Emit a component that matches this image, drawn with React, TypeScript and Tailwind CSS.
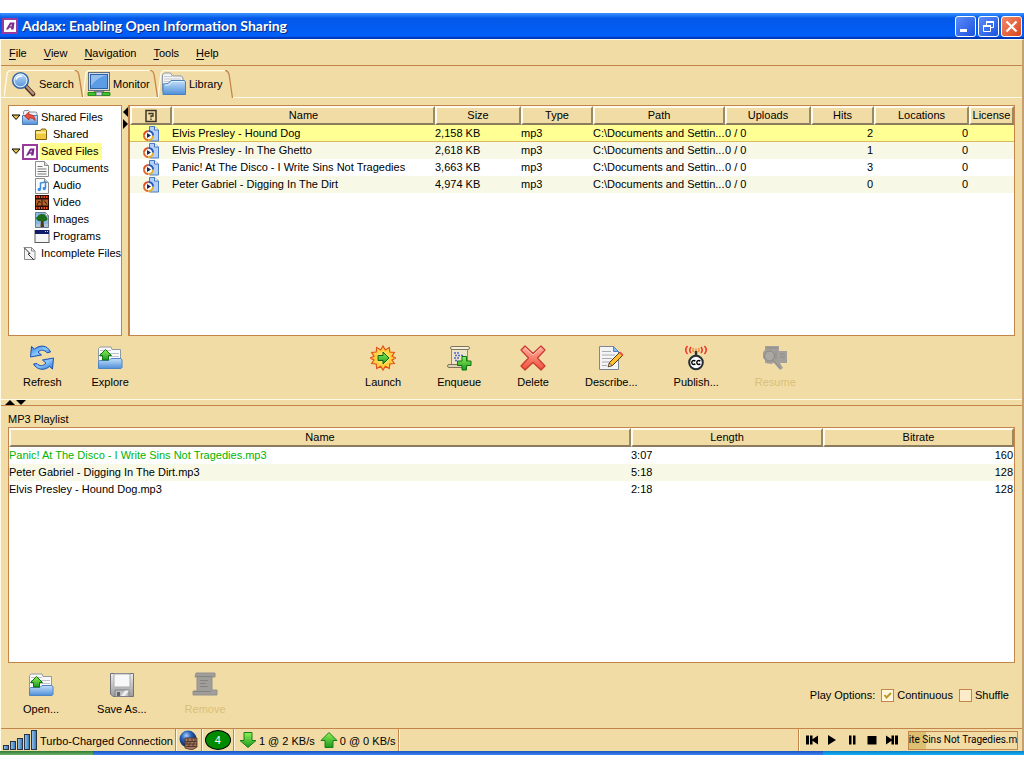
import type { ReactNode } from "react";

interface Track { name: string; size: string; hits: number; }
interface Song { name: string; length: string; bitrate: number; }

const tracks: Track[] = [
  { name: "Elvis Presley - Hound Dog", size: "2,158 KB", hits: 2 },
  { name: "Elvis Presley - In The Ghetto", size: "2,618 KB", hits: 1 },
  { name: "Panic! At The Disco - I Write Sins Not Tragedies", size: "3,663 KB", hits: 3 },
  { name: "Peter Gabriel - Digging In The Dirt", size: "4,974 KB", hits: 0 },
];

const songs: Song[] = [
  { name: "Panic! At The Disco - I Write Sins Not Tragedies.mp3", length: "3:07", bitrate: 160 },
  { name: "Peter Gabriel - Digging In The Dirt.mp3", length: "5:18", bitrate: 128 },
  { name: "Elvis Presley - Hound Dog.mp3", length: "2:18", bitrate: 128 },
];

const menus = ["File", "View", "Navigation", "Tools", "Help"];

/* ---------- icons ---------- */

function Svg({ w, h = w, children }: { w: number; h?: number; children: ReactNode }) {
  return <svg width={w} height={h} viewBox={`0 0 ${w} ${h}`} className="block shrink-0" aria-hidden="true">{children}</svg>;
}

function Defs() {
  return (
    <svg width="0" height="0" className="absolute" aria-hidden="true">
      <defs>
        <linearGradient id="blue" x1="0" y1="0" x2="0" y2="1"><stop offset="0" stopColor="#c4e0fb" /><stop offset="1" stopColor="#4f8fd8" /></linearGradient>
        <linearGradient id="deep" x1="0" y1="0" x2="1" y2="1"><stop offset="0" stopColor="#2f7ce0" /><stop offset="0.5" stopColor="#8cc8fc" /><stop offset="1" stopColor="#2468d0" /></linearGradient>
        <linearGradient id="green" x1="0" y1="0" x2="0" y2="1"><stop offset="0" stopColor="#8ff05a" /><stop offset="1" stopColor="#1c9a1c" /></linearGradient>
        <linearGradient id="red" x1="0" y1="0" x2="0" y2="1"><stop offset="0" stopColor="#ffb09c" /><stop offset="1" stopColor="#f0503c" /></linearGradient>
        <linearGradient id="bar" x1="0" y1="0" x2="1" y2="0"><stop offset="0" stopColor="#9cc8f0" /><stop offset="1" stopColor="#2f74b8" /></linearGradient>
        <radialGradient id="globe" cx="0.4" cy="0.3" r="0.7"><stop offset="0" stopColor="#a8d0ff" /><stop offset="0.4" stopColor="#2c62b8" /><stop offset="1" stopColor="#0a1c48" /></radialGradient>
        <linearGradient id="silver" x1="0" y1="0" x2="0" y2="1"><stop offset="0" stopColor="#ececec" /><stop offset="1" stopColor="#9b9b9b" /></linearGradient>
      </defs>
    </svg>
  );
}

const LogoIcon = () => (
  <Svg w={16}>
    <rect x="1" y="1" width="14" height="14" fill="#fff" stroke="#9a3a9a" strokeWidth="2" />
    <path d="M4 11.500 8 4.500h4.500l-1 7H9l.3-1.800H7.200L6.200 11.500ZM8 8.200h1.500l.3-1.800H9Z" fill="#7d2a8c" />
  </Svg>
);

const SearchIcon = () => (
  <Svg w={26}>
    <path d="m15.500 16 6.500 7" stroke="#4a2c20" strokeWidth="4.500" strokeLinecap="round" />
    <path d="m16 16 6 6.500" stroke="#b89478" strokeWidth="2.500" strokeLinecap="round" />
    <circle cx="9.500" cy="9.500" r="7.800" fill="url(#blue)" stroke="#3a68a4" strokeWidth="1.600" />
    <circle cx="9.500" cy="9.500" r="6.400" fill="none" stroke="#e8f4ff" />
    <path d="M5 8.500c1-3 4-4 6-3" fill="none" stroke="#fff" strokeWidth="1.500" />
  </Svg>
);

const MonitorIcon = () => (
  <Svg w={24}>
    <rect x="1.500" y="0.500" width="21" height="18" fill="#d8dce0" stroke="#5c6c80" />
    <rect x="3.500" y="2.500" width="17" height="14" fill="#5c9ce4" stroke="#2a62a8" />
    <path d="M4 14V3h16Q9 6 4 14Z" fill="#fff" opacity=".35" />
    <path d="M8 18.500h8l1 1.500H7Z" fill="#a0a8b0" stroke="#586470" strokeWidth=".6" />
    <path d="M1 20.500h8v3H1Zm14 0h8v3h-8Z" fill="#3cc42c" stroke="#127a10" strokeWidth=".8" />
    <rect x="9" y="20" width="6" height="3.500" fill="#d4dade" stroke="#586470" strokeWidth=".8" />
  </Svg>
);

const LibraryIcon = () => (
  <Svg w={26} h={24}>
    <path d="M1.500 19.500V3l2-2h6l2 3h9l1.500 2v5" fill="#f4f4f4" stroke="#8a97a8" />
    <path d="M3 4.500h8M3 7h17M3 9.500h17" stroke="#c4cad0" />
    <path d="M2 22.500V12l5-.5 3-3h13.500l1 1.500v12.500Z" fill="url(#blue)" stroke="#4a80c0" />
    <path d="M4 13h4l3-3.500h12" fill="none" stroke="#e4f2ff" />
  </Svg>
);

const RefreshIcon = () => (
  <Svg w={26}>
    <path d="M1.500 12 2.500 1.500l3 2.500C11-.5 18.500 0 21.500 7l-3.500.8C15.500 4.500 12 4.500 9 7l3.500 3Z" fill="url(#deep)" stroke="#1c50b0" strokeLinejoin="round" />
    <path d="M24.500 13 23.500 24l-3-2.500C15 26 8 25 4.500 19l3.500-.5c2.500 3 6 2.800 9-.3L13.500 15Z" fill="url(#deep)" stroke="#1c50b0" strokeLinejoin="round" />
  </Svg>
);

const OpenIcon = () => (
  <Svg w={26} h={24}>
    <path d="M1.500 22V2.500l1.500-1.500h11l1 2.500h8.500V16" fill="#fafafa" stroke="#909aa4" />
    <path d="M3 4.500h11M3 7.500h19M3 10.500h19" stroke="#c0c4c8" />
    <path d="M1.500 22.500V15.500l1.500-1h9l2-2h10l1 1.500v7.500l-1 1Z" fill="url(#blue)" stroke="#4f84c4" />
    <path d="m8.500 3.500 6 6h-3v4.500h-6V9.500h-3Z" fill="url(#green)" stroke="#0c7410" strokeLinejoin="round" />
  </Svg>
);

const LaunchIcon = () => (
  <Svg w={26}>
    <path d="m13 1 2.300 4 4-2.500.5 4.500 4.500.5L22 11.200l3.500 1.800-3.500 2 2.300 3.500-4.500.5-.5 4.500-4-2.300L13 25l-2.300-3.800-4 2.300-.5-4.500-4.500-.5L4 15 .5 13 4 11.200 1.700 7.500l4.500-.5.5-4.500 4 2.500Z" fill="#ffd040" stroke="#e0521c" strokeWidth="1.200" />
    <circle cx="13" cy="13" r="6.500" fill="#ffe060" />
    <path d="M8 10.500h5V7l6 6-6 6v-3.500H8Z" fill="url(#green)" stroke="#0c6410" />
  </Svg>
);

const EnqueueIcon = () => (
  <Svg w={26}>
    <path d="M5.500 3h16v18h-16z" fill="#ede5c8" stroke="#97896a" />
    <rect x="4.500" y="1.500" width="19" height="3" rx="1.500" fill="#f5f0dc" stroke="#807458" />
    <rect x="1.500" y="19.500" width="15" height="3" rx="1.500" fill="#ddd2ae" stroke="#807458" />
    <path d="M8 8h6M9 10.500h8M8 13h5M9 15.500h3" stroke="#5566c8" strokeWidth="1.300" strokeDasharray="2 1" />
    <path d="M16 11.500h4.500V16H25v4.500h-4.500V25H16v-4.500h-4.500V16H16Z" fill="url(#green)" stroke="#0c7410" />
  </Svg>
);

const DeleteIcon = () => (
  <Svg w={26}>
    <path d="M5 1 13 8.500 21 1l4 4-7.500 8 7.500 8-4 4-8-7.500L5 25l-4-4 7.500-8L1 5Z" fill="url(#red)" stroke="#c83830" strokeWidth="1.200" strokeLinejoin="round" />
    <path d="M5 2.700 13 10l8-7.300" fill="none" stroke="#ffd8cc" opacity=".8" />
  </Svg>
);

const DescribeIcon = () => (
  <Svg w={26}>
    <path d="M1.500 1.500h14l5 5v18h-19Z" fill="#f4f4f4" stroke="#7c8694" />
    <path d="M15.500 1.500v5h5Z" fill="#8cbcf0" stroke="#4f84c4" />
    <path d="M4 6.500h9M4 10h13M4 13.500h10M4 17h8M4 20.500h5" stroke="#a8acb0" />
    <path d="m10.500 21.500 1-4L22 7l3 3-10.500 10.500Z" fill="#ffc030" stroke="#5c3410" />
    <path d="m21 8 1.500-1.500 3 3L24 11Z" fill="#e85848" />
    <path d="m10 22 1.500-4 2.500 2.500Z" fill="#f4dcb0" stroke="#332010" strokeWidth=".6" />
  </Svg>
);

const PublishIcon = () => (
  <Svg w={26}>
    <path d="M4.500 1Q1 5 4.500 9M8 2Q5.500 5 8 8M18 2Q20.500 5 18 8M21.500 1Q25 5 21.500 9" fill="none" stroke="#ee3424" strokeWidth="1.500" />
    <path d="M10.500 3Q9 5 10.500 7M15.500 3Q17 5 15.500 7M13 3.500v3" fill="none" stroke="#f08838" strokeWidth="1.400" />
    <path d="M13 6v5" stroke="#333" strokeWidth="2.500" />
    <circle cx="13" cy="17.500" r="6.800" fill="#fff" stroke="#222e34" strokeWidth="2" />
    <path d="M12.300 16.200a2 2 0 1 0 0 2.600M17.300 16.200a2 2 0 1 0 0 2.600" fill="none" stroke="#000" strokeWidth="1.400" />
  </Svg>
);

const ResumeIcon = () => (
  <Svg w={26}>
    <path d="M3 1h14v5h8v12h-7l3 5-3 2-6-7-3 1-6-1v-3L1 13V7l2-2Z" fill="#a3a09b" />
    <path d="M4 3h12M14 6v8M18 9h5M18 12h5M11 15l7 8" fill="none" stroke="#8f8c87" />
    <circle cx="7.500" cy="11" r="5" fill="#aba8a3" stroke="#8b8883" />
  </Svg>
);

const SaveIcon = () => (
  <Svg w={26}>
    <path d="M1.500 1.500h23v23H4l-2.500-2.500Z" fill="url(#silver)" stroke="#70747a" />
    <path d="M5 2h16v13H5Z" fill="#f8f8f8" stroke="#a8acb0" />
    <path d="M6 18h14v6.500H6Z" fill="#bcbec0" stroke="#7c8084" />
    <path d="M12 24 16 18.500h4l-4 5.500Z" fill="#eee" />
    <path d="M8 20h3v4H8Z" fill="#66696c" />
  </Svg>
);

const RemoveIcon = () => (
  <Svg w={26}>
    <path d="M4 1h19v4h-3v13h5v5H1v-4h4V5H3Z" fill="#a09e9a" stroke="#94918d" />
    <path d="M5 4.500h15M8 8.500h8M8 11.500h6M8 14.500h8M2 19.500h17" stroke="#87847f" />
  </Svg>
);

const MediaIcon = () => (
  <Svg w={16}>
    <path d="M6.500.5h5l4 3.500v11h-9Z" fill="#b4d0f8" stroke="#4c7cc0" />
    <path d="M11.500.5v3.500h4" fill="#fff" stroke="#3c70bc" />
    <circle cx="5.500" cy="9.500" r="4.500" fill="#fff" />
    <path d="M5.500 5a4.500 4.500 0 0 0-4.500 4.500" fill="none" stroke="#e05020" strokeWidth="2" />
    <path d="M1 9.500A4.500 4.500 0 0 0 5.500 14" fill="none" stroke="#e06830" strokeWidth="2" />
    <path d="M5.500 14a4.500 4.500 0 0 0 4.500-4.500" fill="none" stroke="#e8b020" strokeWidth="2" />
    <path d="M10 9.500A4.500 4.500 0 0 0 5.500 5" fill="none" stroke="#2858b8" strokeWidth="2" />
    <path d="M4 7 8 9.500 4 12Z" fill="#182850" />
  </Svg>
);

const SharedFilesIcon = () => (
  <Svg w={16}>
    <path d="M1.500 4.500V2l1-1.500h4L8 2h6l1 1v3" fill="#eef2f6" stroke="#8494a8" />
    <path d="M.5 14.500v-9h15v9Z" fill="url(#blue)" stroke="#4a7cb8" />
    <path d="M2.500 6 7 2v2.500c4 0 6 2 6 6-1.500-2-3-2.500-6-2.500v2Z" fill="#e85040" stroke="#a82018" strokeWidth=".7" />
  </Svg>
);

const FolderIcon = () => (
  <Svg w={16}>
    <path d="M1.500 12.500v-9h5l1-1.500h4l1 1.500v9Z" fill="#f0c840" stroke="#7c6010" />
    <path d="M2 5.500h10" stroke="#fff0a0" strokeWidth="2" />
  </Svg>
);

const Page = ({ children }: { children?: ReactNode }) => (
  <Svg w={16}>
    <path d="M1.500.5h9l4 4v11h-13Z" fill="#fbfbfb" stroke="#8c8c8c" />
    <path d="M10.500.5v4h4" fill="#dcdcdc" stroke="#8c8c8c" />
    {children}
  </Svg>
);

const DocumentIcon = () => <Page><path d="M3.500 5.500h5M3.500 8h9M3.500 10.500h9M3.500 13h9" stroke="#777" /></Page>;
const AudioIcon = () => <Page><path d="M6.500 11V5l5-1v6" fill="none" stroke="#3c8ce8" strokeWidth="1.500" /><circle cx="5.300" cy="11.500" r="1.700" fill="#3c8ce8" /><circle cx="10.300" cy="10.500" r="1.700" fill="#3c8ce8" /></Page>;
const VideoIcon = () => (
  <Svg w={16}>
    <rect x="1" width="14" height="15" fill="#2c0c04" />
    <path d="M2 2h12M2 13h12" stroke="#f05028" strokeWidth="2" strokeDasharray="1.500 1" />
    <path d="M2 4.500h5.500v6H2Zm6.500 0H14v6H8.500Z" fill="#b0642c" />
    <path d="m3 10 2-4 1.500 2M10 5.500l3 4" stroke="#3c1808" fill="none" />
  </Svg>
);
const ImagesIcon = () => (
  <Svg w={16}>
    <path d="M1.500.5h10l3 3v12h-13Z" fill="#8cb8e4" stroke="#6c7c8c" />
    <path d="M2 12h12v3H2Z" fill="#a8c8dc" />
    <path d="M7 8h2.500l.5 7H6.500Z" fill="#5c3410" />
    <path d="M3 8Q1 6 3.500 4.500 4.500 1.500 8 2q4 0 4.500 3 2 2 0 3.500-3 1.500-5 .5-2.500 1-4.500-1Z" fill="#1c6c1c" />
    <path d="M11.500.5v3h3Z" fill="#fff" stroke="#8c8c8c" strokeWidth=".7" />
  </Svg>
);
const ProgramsIcon = () => (
  <Svg w={16}>
    <rect x="1" y="1.500" width="14" height="12" fill="#f6f6f6" stroke="#5c5c5c" />
    <path d="M1 1h14v4H1Z" fill="#101c68" />
    <path d="M11 2.500h1M13 2.500h1" stroke="#d0d8ff" />
  </Svg>
);
const IncompleteIcon = () => (
  <Svg w={16}>
    <path d="M2.500 1.500h7l3.500 3.500v8.500H2.500Z" fill="#f4f4f4" stroke="#8c8c8c" />
    <path d="M9.500 1.500V5H13" fill="none" stroke="#8c8c8c" />
    <path d="m2 1.500 6 6-2 .5 6 6" fill="none" stroke="#333" />
  </Svg>
);

const SignalIcon = () => (
  <Svg w={34} h={20}>
    {[4, 8, 11, 15, 19].map((h, i) => (
      <rect key={h} x={i * 7 + 0.5} y={19.5 - h} width="5" height={h} fill="url(#bar)" stroke="#2a3440" />
    ))}
  </Svg>
);

const FirewallIcon = () => (
  <Svg w={20}>
    <circle cx="9" cy="9" r="8.500" fill="url(#globe)" />
    <path d="M6 8h12v9l-5 3-7-2Z" fill="#a8765c" stroke="#4a3428" strokeWidth=".8" />
    <path d="M6 11.500h12M6 14h12M7 16.500h11M9 8v3.500M13 8v3.500M16 8v3.500M8 11.500V14M11 11.500V14M15 11.500V14M10 14v2.500M14 14v2.500" stroke="#4a3428" strokeWidth=".9" />
  </Svg>
);

const ArrowIcon = ({ up }: { up?: boolean }) => (
  <Svg w={18} h={16}>
    {up
      ? <path d="M9 .5 17 8.500h-4v7H5v-7H1Z" fill="url(#green)" stroke="#1a7c18" strokeLinejoin="round" />
      : <path d="M9 15.500 1 8.500h4v-8h8v8h4Z" fill="url(#green)" stroke="#1a7c18" strokeLinejoin="round" />}
  </Svg>
);

/* ---------- pieces ---------- */

function Tab({ icon, label, active, size }: { icon: ReactNode; label: string; active?: boolean; size: string }) {
  return (
    <button role="tab" aria-selected={!!active} className={`relative flex h-7 items-center gap-[2px] ${size} ${active ? "" : "border-b border-[#fffbe8]"}`}>
      <svg viewBox="0 0 76 28" preserveAspectRatio="none" className="absolute inset-0 h-full w-full" aria-hidden="true">
        <path d="M0 28 3 3 5.500.5H68" fill="none" stroke="#fffbe8" strokeWidth="1.300" />
        <path d="M68 .5q3 0 4 4L75.500 28" fill="none" stroke="#c4854a" strokeWidth="1.300" />
      </svg>
      {icon}
      <span>{label}</span>
    </button>
  );
}

function TreeItem({ icon, label, level = 0, open, selected }: { icon: ReactNode; label: string; level?: number; open?: boolean; selected?: boolean }) {
  return (
    <li className={level ? "pl-[25px]" : "pl-[1px]"}>
      <button className="flex h-[17px] items-center whitespace-nowrap">
        {!level && (
          <span className="flex w-3 justify-center">
            {open && <Svg w={10} h={7}><path d="M1 1h8L5 5.500Z" fill="#e8c840" stroke="#000" /></Svg>}
          </span>
        )}
        {icon}
        <span className={`ml-[2px] h-[17px] pr-1 pl-[1px] leading-[17px] ${selected ? "bg-[#ffff90]" : ""}`}>{label}</span>
      </button>
    </li>
  );
}

function ToolButton({ icon, label, disabled, pad = "px-[19px]" }: { icon: ReactNode; label: string; disabled?: boolean; pad?: string }) {
  return (
    <button disabled={disabled} className={`flex flex-col items-center gap-[3px] whitespace-nowrap ${pad} ${disabled ? "text-[#d8c078]" : ""}`}>
      <span className="flex h-[26px] items-center">{icon}</span>
      <span className="leading-4">{label}</span>
    </button>
  );
}

function Th({ children }: { children: ReactNode }) {
  return (
    <th className="h-[19px] border-t-2 border-r-2 border-b-2 border-l-2 border-t-[#fffbee] border-r-[#9a8a64] border-b-[#8a7c5c] border-l-[#fffbee] bg-[#f2dca6] p-0 text-center leading-[15px] font-normal whitespace-nowrap">
      {children}
    </th>
  );
}

const Sep = () => <span className="mx-[2px] h-full w-[2px] border-r border-l border-r-[#fff6dc] border-l-[#c4854a]" />;

function Player({ label, children }: { label: string; children: ReactNode }) {
  return <button aria-label={label} className="flex h-5 w-5 items-center justify-center"><Svg w={12}>{children}</Svg></button>;
}

export default function App() {
  return (
    <div className="flex min-h-screen flex-col bg-white py-[13px] font-['Liberation_Sans',Arial,sans-serif] text-[11px] leading-4 text-black">
      <Defs />

      <header className="flex h-[26px] items-center gap-1 bg-linear-to-b from-[#3a94ff] via-[#0458e8] via-20% to-[#0060fc] pr-[2px] pl-[2px] shadow-[inset_0_-2px_1px_#0038b8]">
        <LogoIcon />
        <h1 className="flex-1 font-['Lato','Open_Sans',sans-serif] text-[14px] font-bold text-white [text-shadow:1px_1px_0_#0a2c80]">Addax: Enabling Open Information Sharing</h1>
        <div className="flex gap-[2px]">
          <button aria-label="Minimize" className="flex h-[21px] w-[21px] items-center justify-center rounded-[3px] border border-white bg-linear-to-br from-[#5c8cf8] to-[#1c50e0]">
            <Svg w={17}><path d="M3 12.500h7" stroke="#fff" strokeWidth="3" /></Svg>
          </button>
          <button aria-label="Restore" className="flex h-[21px] w-[21px] items-center justify-center rounded-[3px] border border-white bg-linear-to-br from-[#5c8cf8] to-[#1c50e0]">
            <Svg w={17}>
              <path d="M6.500 7V3.500h7v6H11" fill="none" stroke="#fff" />
              <path d="M6 4h8" stroke="#fff" strokeWidth="2" />
              <path d="M3.500 7.500h7v6h-7Z" fill="none" stroke="#fff" />
              <path d="M3 8h8" stroke="#fff" strokeWidth="2" />
            </Svg>
          </button>
          <button aria-label="Close" className="flex h-[21px] w-[21px] items-center justify-center rounded-[3px] border border-white bg-linear-to-br from-[#f08868] to-[#dc4414]">
            <Svg w={17}><path d="m3.500 3.500 10 10m0-10-10 10" stroke="#fff" strokeWidth="2.200" /></Svg>
          </button>
        </div>
      </header>

      <div className="flex flex-1 flex-col border-t border-r-2 border-l border-t-[#fffbe8] border-r-[#c4a070] border-l-[#fffbe8] bg-[#f2dca6]">
        <nav className="flex h-[26px] items-center gap-[17px] border-b border-[#c4854a] pt-[1px] pl-2">
          {menus.map(m => (
            <button key={m}><span className="underline underline-offset-2">{m[0]}</span>{m.slice(1)}</button>
          ))}
        </nav>

        <div role="tablist" className="flex pt-1">
          <span className="w-[3px] border-b border-[#fffbe8]" />
          <Tab icon={<SearchIcon />} label="Search" size="w-[79px] pl-[7px]" />
          <Tab icon={<MonitorIcon />} label="Monitor" size="w-[75px] pl-[4px]" />
          <Tab icon={<LibraryIcon />} label="Library" size="w-[75px] pl-[3px]" active />
          <span className="flex-1 border-b border-[#fffbe8]" />
        </div>

        <div className="flex flex-[231_1_0px] pt-[7px] pr-[7px] pl-[7px]">
          <ul className="w-[114px] border border-[#c4854a] bg-white pt-[3px]">
            <TreeItem icon={<SharedFilesIcon />} label="Shared Files" open />
            <TreeItem icon={<FolderIcon />} label="Shared" level={1} />
            <TreeItem icon={<LogoIcon />} label="Saved Files" open selected />
            <TreeItem icon={<DocumentIcon />} label="Documents" level={1} />
            <TreeItem icon={<AudioIcon />} label="Audio" level={1} />
            <TreeItem icon={<VideoIcon />} label="Video" level={1} />
            <TreeItem icon={<ImagesIcon />} label="Images" level={1} />
            <TreeItem icon={<ProgramsIcon />} label="Programs" level={1} />
            <TreeItem icon={<IncompleteIcon />} label="Incomplete Files" />
          </ul>
          <div className="flex w-[6px] flex-col items-center gap-[2px] pt-[2px]">
            <button aria-label="Collapse left"><Svg w={6} h={10}><path d="M6 0v10L1 5Z" /></Svg></button>
            <button aria-label="Collapse right"><Svg w={6} h={10}><path d="M1 0v10l5-5Z" /></Svg></button>
          </div>
          <div className="flex-1 border border-l-2 border-[#c4854a] bg-white">
            <table className="w-full table-fixed border-separate border-spacing-0">
              <colgroup>
                <col className="w-[42px]" /><col /><col className="w-[86px]" /><col className="w-[72px]" /><col className="w-[132px]" />
                <col className="w-[86px]" /><col className="w-[63px]" /><col className="w-[95px]" /><col className="w-[45px]" />
              </colgroup>
              <thead>
                <tr>
                  <Th>
                    <span className="flex justify-center">
                      <Svg w={12} h={14}>
                        <rect x="1" y="1.500" width="10" height="11" fill="none" stroke="#3c3424" strokeWidth="1.500" />
                        <path d="M4 5.500V4.500h4V7H6v1.500M6 9.500V11" fill="none" stroke="#3c3424" strokeWidth="1.300" />
                      </Svg>
                    </span>
                  </Th>
                  <Th>Name</Th><Th>Size</Th><Th>Type</Th><Th>Path</Th><Th>Uploads</Th><Th>Hits</Th><Th>Locations</Th><Th>License</Th>
                </tr>
              </thead>
              <tbody className="[&_td]:h-[17px] [&_td]:p-0 [&_td]:leading-[17px] [&_td]:whitespace-nowrap">
                {tracks.map((t, i) => (
                  <tr key={t.name} className={i === 0 ? "bg-[#ffff94] [&_td]:shadow-[inset_0_-1px_0_#d8b860]" : i % 2 ? "bg-[#f8f8e6]" : ""}>
                    <td><span className="flex justify-center"><MediaIcon /></span></td>
                    <td>{t.name}</td>
                    <td>{t.size}</td>
                    <td>mp3</td>
                    <td>C:\Documents and Settin...</td>
                    <td>0 / 0</td>
                    <td><div className="pr-[1px] text-right">{t.hits}</div></td>
                    <td><div className="pr-[1px] text-right">0</div></td>
                    <td></td>
                  </tr>
                ))}
              </tbody>
            </table>
          </div>
        </div>

        <div className="flex h-[63px] items-start pt-[9px] pr-[7px] pl-[7px]">
          <ToolButton icon={<RefreshIcon />} label="Refresh" pad="px-[15px]" />
          <ToolButton icon={<OpenIcon />} label="Explore" pad="px-[15px]" />
          <div className="flex flex-1 justify-center pl-[2px]">
            <ToolButton icon={<LaunchIcon />} label="Launch" pad="px-[18px]" />
            <ToolButton icon={<EnqueueIcon />} label="Enqueue" pad="px-[18px]" />
            <ToolButton icon={<DeleteIcon />} label="Delete" pad="px-[18px]" />
            <ToolButton icon={<DescribeIcon />} label="Describe..." pad="px-[18px]" />
            <ToolButton icon={<PublishIcon />} label="Publish..." pad="px-[18px]" />
            <ToolButton icon={<ResumeIcon />} label="Resume" pad="px-[18px]" disabled />
          </div>
        </div>

        <div className="flex h-[7px] items-end gap-[1px] border-t border-b border-t-[#fffbe8] border-b-[#c4854a] pl-1">
          <button aria-label="Collapse up"><Svg w={10} h={5}><path d="M0 5h10L5 0Z" /></Svg></button>
          <button aria-label="Collapse down"><Svg w={10} h={5}><path d="M0 0h10L5 5Z" /></Svg></button>
        </div>

        <section className="flex flex-[257_1_0px] flex-col pr-[7px] pl-[7px]">
          <h2 className="pt-[5px]">MP3 Playlist</h2>
          <div className="flex-1 border border-[#c4854a] bg-white">
            <table className="w-full table-fixed border-separate border-spacing-0">
              <colgroup><col /><col className="w-[192px]" /><col className="w-[191px]" /></colgroup>
              <thead><tr><Th>Name</Th><Th>Length</Th><Th>Bitrate</Th></tr></thead>
              <tbody className="[&_td]:h-[17px] [&_td]:p-0 [&_td]:leading-[17px] [&_td]:whitespace-nowrap">
                {songs.map((s, i) => (
                  <tr key={s.name} className={`${i % 2 ? "bg-[#f8f8e6]" : ""} ${i === 0 ? "[&_td:first-child]:text-[#00b400]" : ""}`}>
                    <td>{s.name}</td>
                    <td>{s.length}</td>
                    <td><div className="pr-[1px] text-right">{s.bitrate}</div></td>
                  </tr>
                ))}
              </tbody>
            </table>
          </div>
        </section>

        <div className="flex h-[65px] items-start pt-[9px] pr-[13px] pl-[3px]">
          <ToolButton icon={<OpenIcon />} label="Open..." />
          <ToolButton icon={<SaveIcon />} label="Save As..." />
          <ToolButton icon={<RemoveIcon />} label="Remove" disabled />
          <div className="flex flex-1 items-center justify-end pt-[15px]">
            <span className="pr-[6px]">Play Options:</span>
            <label className="flex items-center gap-[3px] pr-[6px]">
              <span className="relative flex">
                <input type="checkbox" defaultChecked className="peer h-[13px] w-[13px] appearance-none border border-[#c4854a] bg-[#fff6dc]" />
                <svg viewBox="0 0 13 13" className="pointer-events-none absolute inset-0 hidden peer-checked:block" aria-hidden="true"><path d="m3.500 6 2 2.500L10 4" fill="none" stroke="#c09a20" strokeWidth="2" /></svg>
              </span>
              Continuous
            </label>
            <label className="flex items-center gap-[3px]">
              <input type="checkbox" className="h-[13px] w-[13px] appearance-none border border-[#c4854a] bg-[#fbebc8]" />
              Shuffle
            </label>
          </div>
        </div>

        <footer className="flex h-[23px] items-center border-t border-[#c4854a] pl-[2px]">
          <SignalIcon />
          <span className="pt-[2px] pl-[3px] whitespace-nowrap">Turbo-Charged Connection</span>
          <Sep />
          <FirewallIcon />
          <Sep />
          <span className="flex h-5 w-[26px] items-center justify-center rounded-[50%] border border-black bg-[#008a00] text-white">4</span>
          <Sep />
          <span className="pl-[2px]"><ArrowIcon /></span>
          <span className="pt-[2px] pr-[5px] pl-[2px] whitespace-nowrap">1 @ 2 KB/s</span>
          <ArrowIcon up />
          <span className="pt-[2px] pl-[2px] whitespace-nowrap">0 @ 0 KB/s</span>
          <Sep />
          <span className="flex-1" />
          <Sep />
          <div className="flex pr-[6px]">
            <Player label="Previous"><path d="M0 1.500h3v9H0Zm12 0v9L6.500 6.800v3.700H4v-9h2.500v3.700Z" /></Player>
            <Player label="Play"><path d="M2 1v10l8-5Z" /></Player>
            <Player label="Pause"><path d="M3 1.500h2.500v9H3Zm4 0h2.500v9H7Z" /></Player>
            <Player label="Stop"><path d="M1.500 2h9v8.500h-9Z" /></Player>
            <Player label="Next"><path d="M0 1.500v9l5.500-3.700v3.700H8v-9H5.500v3.700Zm9 0h3v9H9Z" /></Player>
          </div>
          <div className="mr-1 flex h-[19px] w-[110px] items-center justify-center border border-[#c4854a] bg-linear-to-r from-[#dcc070] from-[17px] to-[#f2dca6] to-[17px] font-['Roboto',sans-serif] text-[10px] whitespace-nowrap">
            ite Sins Not Tragedies.m
          </div>
        </footer>
      </div>

      <div className="flex h-1">
        <span className="w-[93px] bg-linear-to-b from-[#2c7c34] to-[#6cb068]" />
        <span className="flex-1 bg-linear-to-b from-[#1c54c4] to-[#3c84ee]" />
        <span className="w-[201px] bg-linear-to-b from-[#0c7cc8] to-[#14b4f4]" />
      </div>
    </div>
  );
}
